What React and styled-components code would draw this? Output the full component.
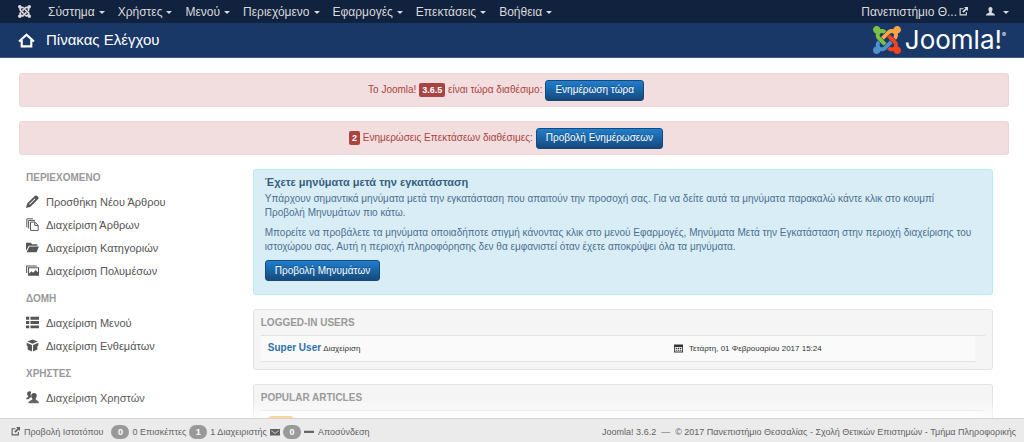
import React from "react";
import styled, { createGlobalStyle } from "styled-components";

const Global = createGlobalStyle`
  * { box-sizing: border-box; }
  body { margin: 0; background: #fff; color: #444; font: 11px/14px "Liberation Sans", Arial, sans-serif; }
  a { color: inherit; text-decoration: none; }
  p, h1, h2, ul { margin: 0; padding: 0; }
  ul { list-style: none; }
  svg { flex: none; }
`;

const Page = styled.div`
  height: 100vh;
  display: flex;
  flex-direction: column;
`;
const NavBar = styled.nav`
  flex: none;
  height: 23px;
  display: flex;
  align-items: center;
  padding: 0 15px 0 18px;
  background: #10223e;
  color: #d9d9d9;
  font-size: 12px;
`;
const Menu = styled.ul`
  display: flex;
  flex: 1;
  gap: 13px;
  margin-left: 17px;
`;
const MenuButton = styled.button`
  display: flex;
  align-items: center;
  gap: ${(p) => (p.$wide ? 8 : 4)}px;
  padding: 0;
  border: 0;
  background: none;
  color: inherit;
  font: inherit;
  white-space: nowrap;
`;
const Caret = styled.span`
  border: 3px solid transparent;
  border-top-color: currentColor;
  border-bottom: 0;
  margin-top: 2px;
`;
const SiteLink = styled.a`
  display: flex;
  align-items: center;
  gap: 2px;
  margin-right: 18px;
`;
const Header = styled.header`
  flex: none;
  height: 35px;
  display: flex;
  align-items: center;
  justify-content: space-between;
  padding: 0 18px;
  background: #1a3867;
  border-bottom: 1px solid #3b5687;
  color: #fff;
`;
const Title = styled.h1`
  display: flex;
  align-items: center;
  gap: 11px;
  font-size: 15px;
  font-weight: 400;
  line-height: 20px;
`;
const Content = styled.main`
  flex: 1;
  min-height: 0;
  overflow: auto;
  scrollbar-width: none;
  padding: 15px 15px 0 19px;
`;
const Alert = styled.div`
  display: flex;
  align-items: center;
  justify-content: center;
  gap: 3px;
  height: 34px;
  margin-bottom: 14px;
  padding-right: 16px;
  border: 1px solid #eed3d7;
  border-radius: 3px;
  background: #f2dede;
  color: #a94442;
  font-size: 10px;
`;
const Label = styled.span`
  display: inline-block;
  padding: 0 3px;
  border-radius: 2px;
  background: #a94442;
  color: #fff;
  font-size: 9px;
  font-weight: 700;
`;
const Button = styled.button`
  height: 21px;
  padding: 0 9px;
  border: 1px solid #15497c;
  border-radius: 3px;
  background: linear-gradient(#1f7fcf, #15497c);
  color: #fff;
  font: 10px/14px "Liberation Sans", Arial, sans-serif;
  text-shadow: 0 -1px 0 rgba(0, 0, 0, 0.25);
`;
const Columns = styled.div`
  display: flex;
  padding-right: 16px;
`;
const Sidebar = styled.aside`
  flex: 0 0 24%;
  padding: 2px 0 0 7px;
`;
const GroupTitle = styled.h2`
  color: #999;
  font-size: 10px;
  line-height: 14px;
  text-transform: uppercase;
`;
const LinkList = styled.ul`
  padding: 5px 0 10px;
`;
const SideLink = styled.a`
  display: flex;
  align-items: center;
  gap: 7px;
  height: 23px;
  color: #555;
`;
const Panels = styled.div`
  flex: 1;
  min-width: 0;
`;
const InfoBox = styled.section`
  padding: 5px 19px 13px 11px;
  border: 1px solid #bce8f1;
  border-radius: 3px;
  background: #d9edf7;
  color: #4c6f8f;
  font-size: 10px;
  p { margin-bottom: 6px; }
`;
const InfoTitle = styled.h2`
  margin-bottom: 3px;
  color: #35617f;
  font-size: 11px;
  line-height: 14px;
`;
const Well = styled.section`
  margin-top: 14px;
  padding: 6px 7px 7px;
  border: 1px solid #e3e3e3;
  border-radius: 3px;
  background: #f5f5f5;
`;
const RowList = styled.div`
  margin-top: 5px;
  padding-right: 10px;
  border-top: 1px solid #e2e2e2;
`;
const Row = styled.div`
  display: grid;
  grid-template-columns: 58% 1fr;
  align-items: center;
  height: 26px;
  padding: 0 7px;
  border-bottom: 1px solid #e2e2e2;
  background: #fafafa;
  font-size: 8px;
  color: #333;
`;
const UserName = styled.a`
  color: #3071a9;
  font-size: 10px;
  font-weight: 700;
`;
const DateCell = styled.span`
  display: flex;
  align-items: center;
  gap: 6px;
`;
const Hits = styled.span`
  width: 26px;
  height: 16px;
  border-radius: 4px;
  background: #f89406;
`;
const Footer = styled.footer`
  flex: none;
  position: relative;
  display: flex;
  align-items: center;
  justify-content: space-between;
  height: 24px;
  padding: 2px 8px 0 11px;
  border-top: 1px solid #d4d4d4;
  background: #ebebeb;
  box-shadow: 0 -11px 11px rgba(255, 255, 255, 0.6);
  color: #626262;
  font-size: 9px;
`;
const Status = styled.div`
  display: flex;
  align-items: center;
  gap: 3px;
`;
const FootLink = styled.a`
  display: flex;
  align-items: center;
  gap: 4px;
  margin-right: ${(p) => (p.$last ? 0 : 5)}px;
`;
const Badge = styled.span`
  min-width: 18px;
  padding: 0 6px;
  border-radius: 7px;
  background: #999;
  color: #fff;
  font-weight: 700;
  text-align: center;
`;

const markParts = [
  "M.6 92.1C.6 58.8 27.4 32 60.4 32c30 0 54.5 21.9 59.200 50.200 32.600-7.600 67.100.6 96.500 30l-44.300 44.300c-20.500-20.500-42.600-16.300-55.400-3.500-14.300 14.300-14.300 37.900 0 52.200l99.500 99.500-44 44.300c-87.700-87.200-49.700-49.700-99.800-99.700-26.800-26.500-35-64.800-24.800-98.900C20.400 144.600.6 120.700.6 92.100z",
  "M130.100 208.500l44.300 44.300c10-10 89.700-89.700 99.700-99.800 14.300-14.300 37.600-14.300 51.900 0 12.800 12.800 17 35-3.500 55.400l44 44.300c31.200-31.200 38.500-67.600 28.900-101.200 29.200-4.100 51.900-29.200 51.900-59.500 0-33.200-26.800-60.100-59.800-60.100-30.300 0-55.400 22.500-59.500 51.600-33.800-9.900-71.700-1.500-98.300 25.100-18.300 19.100-71.100 71.500-99.600 99.900z",
  "M396.400 360.700c8.200-32.700-.9-68.500-26.300-93.900-11.800-12.200 5 4.700-99.500-99.700l-44.300 44.300 99.700 99.700c14.300 14.300 14.300 37.600 0 51.900-12.800 12.800-35 17-55.400-3.500l-44 44.300c27.600 30.200 68 38.800 102.700 28 5.500 27.400 29.700 48.100 58.900 48.100 33 0 59.800-26.800 59.800-60.100 0-30.200-22.500-55-51.600-59.100z",
  "M312.100 307.600l-44-44.300c-87 86.400-50.400 50.400-99.700 99.800-14.300 14.300-37.600 14.300-51.900 0-13.100-13.400-16.900-35.300 3.200-55.400l-44-44.300c-30.200 30.200-38 65.200-29.500 98.300-26.700 6-46.200 29.900-46.200 58.200C0 453.200 26.800 480 59.800 480c28.600 0 52.500-19.800 58.600-46.700 32.700 8.200 68.500-.6 94.200-26 32.100-32 12.200-12.400 99.500-99.700z",
];
const JoomlaMark = ({ size, colors }) => (
  <svg width={size} height={size} viewBox="0 32 448 448" aria-hidden="true">
    {markParts.map((d, i) => (
      <path key={i} d={d} fill={colors[i % colors.length]} />
    ))}
  </svg>
);

const icons = {
  home: <path d="M1 9 8 2.500 15 9M3.500 7.500v6h9v-6" fill="none" stroke="currentColor" strokeWidth="2" />,
  pencil: <path fillRule="evenodd" d="M0 16l1.500-5.500L11 1q1.200-1 2.500 0l1.500 1.500q1 1.200 0 2.500L5.500 14.500zM3.800 11.200 10.800 4.200l.8.8-7 7z" />,
  copy: <path d="M1 11.500V1h7.500M3.200 13V3h8M5.500 5h5.500l4 4v6.300H5.500zM10.800 5v4.200H15" fill="none" stroke="currentColor" strokeWidth="1.200" />,
  folder: <path d="M0 2h6l1.500 2H14v1.800H3.500L0 12zM4.200 6.800H16l-3 7H.8z" />,
  images: (
    <>
      <path d="M.8 11V2.500h12.500" fill="none" stroke="currentColor" strokeWidth="1.300" />
      <path fillRule="evenodd" d="M2.500 4H16v10.500H2.500zM3.800 5.300v6.500l3-3 2 2L12 7.500l2.700 3V5.300z" />
    </>
  ),
  list: <path d="M0 1h4v3.500H0zM5.500 1H16v3.500H5.500zM0 6.300h4v3.500H0zM5.500 6.300H16v3.500H5.500zM0 11.600h4v3.500H0zM5.500 11.600H16v3.500H5.500z" />,
  cube: <path d="M8 .5l6.500 2.500L8 5.800 1.500 3zM.8 4.600l6.500 2.700V15.500L2 13V8.500L.8 8zM15.200 4.600 8.700 7.300v8.200L14 13V8.500l1.200-.5z" />,
  users: (
    <>
      <path d="M1.500 2q2-2.500 5-1-2 4 .5 6.500-2.500.5-4 2.500H0q.3-2 3-3Q.8 4.500 1.500 2z" />
      <path d="M10 2.500c4.500 0 3.500 5 1.700 7 .2 2.500 4.300 1.500 4.300 5.500H3c0-4 5-3 5-5.500-1.800-2-3-7 2-7z" />
    </>
  ),
  user: <path d="M8 0c5 0 4 6 2 8.500C10 11.500 16 11 16 15H0c0-4 6-3.500 6-6.500C4 6 3 0 8 0z" />,
  out: (
    <>
      <path d="M8 3H2v11h11V9" fill="none" stroke="currentColor" strokeWidth="2" />
      <path d="M9 0h7v7l-2.300-2.300L8 10.400 5.800 8.200l5.600-5.700z" />
    </>
  ),
  mail: <path fillRule="evenodd" d="M0 3h16v10.500H0zM2 5l6 4.500L14 5v1.200l-6 4.500-6-4.500z" />,
  minus: <path d="M0 6h16v3.500H0z" />,
  calendar: <path fillRule="evenodd" d="M0 1h16v14H0zM1.500 5.500v8h13v-8zM3 6.800h2.500v2H3zM6.800 6.800h2.500v2H6.800zM10.500 6.800H13v2h-2.500zM3 10.200h2.500v2H3zM6.800 10.200h2.500v2H6.800zM10.500 10.200H13v2h-2.500z" />,
};
const Icon = ({ name, size }) => (
  <svg width={size} height={size} viewBox="0 0 16 16" fill="currentColor" aria-hidden="true">
    {icons[name]}
  </svg>
);

const Wordmark = styled.span`
  font: 400 26px/28px Inter, "Lato", sans-serif;
`;
const Trade = styled.sup`
  font-size: 6px;
  line-height: 6px;
  vertical-align: 12px;
`;
const Brand = styled.a`
  display: flex;
  align-items: center;
  gap: 4px;
`;

const menus = ["Σύστημα", "Χρήστες", "Μενού", "Περιεχόμενο", "Εφαρμογές", "Επεκτάσεις", "Βοήθεια"];
const groups = [
  ["Περιεχομενο", [["pencil", "Προσθήκη Νέου Άρθρου"], ["copy", "Διαχείριση Άρθρων"], ["folder", "Διαχείριση Κατηγοριών"], ["images", "Διαχείριση Πολυμέσων"]]],
  ["Δομη", [["list", "Διαχείριση Μενού"], ["cube", "Διαχείριση Ενθεμάτων"]]],
  ["Χρηστες", [["users", "Διαχείριση Χρηστών"]]],
];

export default function App() {
  return (
    <Page>
      <Global />
      <NavBar>
        <JoomlaMark size={13} colors={["#d9d9d9"]} />
        <Menu>
          {menus.map((m) => (
            <li key={m}>
              <MenuButton>{m}<Caret /></MenuButton>
            </li>
          ))}
        </Menu>
        <SiteLink href="#">Πανεπιστήμιο Θ...<Icon name="out" size={9} /></SiteLink>
        <MenuButton $wide aria-label="User menu"><Icon name="user" size={9} /><Caret /></MenuButton>
      </NavBar>
      <Header>
        <Title><Icon name="home" size={17} />Πίνακας Ελέγχου</Title>
        <Brand href="#">
          <JoomlaMark size={28} colors={["#7ac143", "#f9a541", "#f44321", "#5091cd"]} />
          <Wordmark>Joomla!<Trade>®</Trade></Wordmark>
        </Brand>
      </Header>
      <Content>
        <Alert>
          <span>Το Joomla! <Label>3.6.5</Label> είναι τώρα διαθέσιμο:</span>
          <Button>Ενημέρωση τώρα</Button>
        </Alert>
        <Alert>
          <span><Label>2</Label> Ενημερώσεις Επεκτάσεων διαθέσιμες:</span>
          <Button>Προβολή Ενημέρωσεων</Button>
        </Alert>
        <Columns>
          <Sidebar>
            {groups.map(([title, links]) => (
              <React.Fragment key={title}>
                <GroupTitle>{title}</GroupTitle>
                <LinkList>
                  {links.map(([icon, text]) => (
                    <li key={text}><SideLink href="#"><Icon name={icon} size={13} />{text}</SideLink></li>
                  ))}
                </LinkList>
              </React.Fragment>
            ))}
          </Sidebar>
          <Panels>
            <InfoBox>
              <InfoTitle>Έχετε μηνύματα μετά την εγκατάσταση</InfoTitle>
              <p>Υπάρχουν σημαντικά μηνύματα μετά την εγκατάσταση που απαιτούν την προσοχή σας. Για να δείτε αυτά τα μηνύματα παρακαλώ κάντε κλικ στο κουμπί Προβολή Μηνυμάτων πιο κάτω.</p>
              <p>Μπορείτε να προβάλετε τα μηνύματα οποιαδήποτε στιγμή κάνοντας κλικ στο μενού Εφαρμογές, Μηνύματα Μετά την Εγκατάσταση στην περιοχή διαχείρισης του ιστοχώρου σας. Αυτή η περιοχή πληροφόρησης δεν θα εμφανιστεί όταν έχετε αποκρύψει όλα τα μηνύματα.</p>
              <Button>Προβολή Μηνυμάτων</Button>
            </InfoBox>
            <Well>
              <GroupTitle>Logged-in Users</GroupTitle>
              <RowList>
                <Row>
                  <span><UserName href="#">Super User</UserName> Διαχείριση</span>
                  <DateCell><Icon name="calendar" size={9} />Τετάρτη, 01 Φεβρουαρίου 2017 15:24</DateCell>
                </Row>
              </RowList>
            </Well>
            <Well>
              <GroupTitle>Popular Articles</GroupTitle>
              <RowList>
                <Row><Hits /></Row>
              </RowList>
            </Well>
          </Panels>
        </Columns>
      </Content>
      <Footer>
        <Status>
          <FootLink href="#"><Icon name="out" size={9} />Προβολή Ιστοτόπου</FootLink>
          <Badge>0</Badge><span>0 Επισκέπτες</span>
          <Badge>1</Badge><span>1 Διαχειριστής</span>
          <Icon name="mail" size={10} /><Badge>0</Badge>
          <FootLink $last href="#"><Icon name="minus" size={10} />Αποσύνδεση</FootLink>
        </Status>
        <span>Joomla! 3.6.2 &nbsp;—&nbsp; © 2017 Πανεπιστήμιο Θεσσαλίας - Σχολή Θετικών Επιστημών - Τμήμα Πληροφορικής</span>
      </Footer>
    </Page>
  );
}
